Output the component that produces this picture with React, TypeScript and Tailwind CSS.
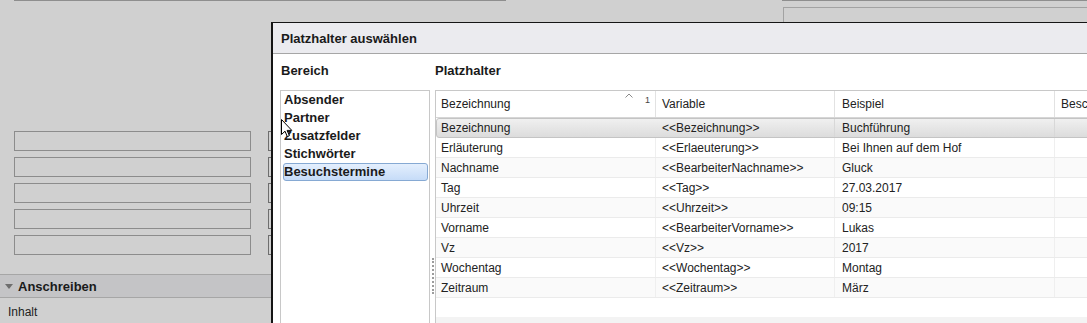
import React from "react";

const rows: [string, string, string][] = [
  ["Bezeichnung", "<<Bezeichnung>>", "Buchführung"],
  ["Erläuterung", "<<Erlaeuterung>>", "Bei Ihnen auf dem Hof"],
  ["Nachname", "<<BearbeiterNachname>>", "Gluck"],
  ["Tag", "<<Tag>>", "27.03.2017"],
  ["Uhrzeit", "<<Uhrzeit>>", "09:15"],
  ["Vorname", "<<BearbeiterVorname>>", "Lukas"],
  ["Vz", "<<Vz>>", "2017"],
  ["Wochentag", "<<Wochentag>>", "Montag"],
  ["Zeitraum", "<<Zeitraum>>", "März"],
];

const areas = ["Absender", "Partner", "Zusatzfelder", "Stichwörter", "Besuchstermine"];

function Cursor() {
  return (
    <svg
      className="absolute left-[281px] top-[119px] z-10"
      width="12"
      height="19"
      viewBox="0 0 12 19"
    >
      <path
        d="M0.5 0.5 L0.5 15.5 L4 12.2 L6.3 17.6 L8.4 16.7 L6.1 11.4 L10.8 11.4 Z"
        fill="#ffffff"
        stroke="#000000"
        strokeWidth="1"
        strokeLinejoin="miter"
      />
    </svg>
  );
}

export default function App() {
  return (
    <div className="relative w-[1087px] h-[323px] overflow-hidden bg-[#d0d0d0] font-['Liberation_Sans',Arial,sans-serif] text-[#1a1a1a]">
      {/* top strip of background */}
      <div className="flex h-[22px]">
        <div className="w-[14px] shrink-0" />
        <div className="w-[492px] h-px shrink-0 bg-[#8e8e8e]" />
        <div className="w-[276px] shrink-0" />
        <div className="flex-1 flex flex-col">
          <div className="h-px bg-[#8e8e8e]" />
          <div className="mt-[6px] ml-px flex-1 border-l border-t border-[#a2a2a2]" />
        </div>
      </div>

      {/* left background panel */}
      <div className="flex flex-col w-[300px]">
        <div className="h-[109px]" />
        <div className="flex flex-col gap-[6px]">
          {[0, 1, 2, 3, 4].map((i) => (
            <div key={i} className="flex h-[20px]">
              <div className="ml-[14px] w-[237px] border border-[#8c8c8c]" />
              <div className="ml-[17px] w-[30px] border border-[#6e6e6e]" />
            </div>
          ))}
        </div>
        <div className="h-[19px]" />
        <div className="h-[24px] flex items-center border-t border-b border-[#a6a6a6] bg-[#c4c4c6]">
          <svg className="ml-[5px]" width="8" height="5" viewBox="0 0 8 5">
            <polygon points="0,0 8,0 4,5" fill="#6e6e6e" />
          </svg>
          <span className="ml-[5px] text-[13px] font-bold leading-[15px]">Anschreiben</span>
        </div>
        <div className="pl-[8px] pt-[7px] text-[12px] leading-[14px] text-[#222]">Inhalt</div>
      </div>

      {/* dialog */}
      <div className="absolute left-[271px] top-[22px] w-[840px] h-[320px] bg-white border-l-2 border-t border-[#151515] flex flex-col">
        <div className="h-[31px] shrink-0 bg-[#ebebef] border-b border-[#a6a6a6] pl-[8px] flex items-center text-[13px] font-bold leading-[15px] text-[#1a1a1a]">
          Platzhalter auswählen
        </div>
        <div className="flex flex-1 min-h-0 pl-[7px]">
          {/* Bereich */}
          <div className="w-[150px] shrink-0 flex flex-col">
            <div className="h-[36px] shrink-0 pl-px pt-[9px] text-[13px] font-bold leading-[15px]">Bereich</div>
            <div className="flex-1 border border-[#c8c8c8] flex flex-col">
              {areas.map((a) =>
                a === "Besuchstermine" ? (
                  <div
                    key={a}
                    className="ml-[2px] mr-px h-[18px] flex items-center border border-[#86a9d3] rounded-[3px] bg-gradient-to-b from-[#e4effd] to-[#c6dcf8] text-[13px] font-bold"
                  >
                    {a}
                  </div>
                ) : (
                  <div key={a} className="h-[18px] flex items-center pl-[3px] text-[13px] font-bold">
                    {a}
                  </div>
                )
              )}
            </div>
          </div>

          {/* splitter */}
          <div className="w-[5px] shrink-0 flex flex-col">
            <div className="ml-[2px] mt-[204px] h-[36px] w-[2px] border-l-2 border-dotted border-[#9c9c9c]" />
          </div>

          {/* Platzhalter */}
          <div className="flex-1 flex flex-col">
            <div className="h-[36px] shrink-0 pt-[9px] text-[13px] font-bold leading-[15px]">Platzhalter</div>
            <div className="flex-1 border-l border-t border-[#c8c8c8] flex flex-col text-[12px] text-[#222]">
              {/* header */}
              <div className="h-[27px] shrink-0 flex border-b border-[#d6d6d6]">
                <div className="relative w-[220px] shrink-0 border-r border-[#e2e2e2] pl-[5px] flex items-center">
                  Bezeichnung
                  <svg className="absolute left-[189px] top-[2px]" width="8" height="5" viewBox="0 0 8 5">
                    <polyline points="0.5,4.5 4,1 7.5,4.5" fill="none" stroke="#8a8a8a" strokeWidth="1" />
                  </svg>
                  <span className="absolute left-[209px] top-[4px] text-[9px] leading-[10px] text-[#444]">1</span>
                </div>
                <div className="w-[179px] shrink-0 border-r border-[#e2e2e2] pl-[6px] flex items-center">Variable</div>
                <div className="w-[220px] shrink-0 border-r border-[#e2e2e2] pl-[7px] flex items-center">Beispiel</div>
                <div className="flex-1 pl-[6px] flex items-center">Beschreibung</div>
              </div>
              {/* rows */}
              {rows.map((r, i) =>
                i === 0 ? (
                  <div
                    key={i}
                    className="h-[20px] shrink-0 flex border border-[#c4c4c4] rounded-[3px] bg-gradient-to-b from-[#f0f0f0] to-[#dcdcdc]"
                  >
                    <div className="w-[219px] shrink-0 pl-[4px] flex items-center">{r[0]}</div>
                    <div className="w-[179px] shrink-0 border-r border-[#d8d8d8] pl-[6px] flex items-center">{r[1]}</div>
                    <div className="w-[220px] shrink-0 border-r border-[#d8d8d8] pl-[7px] flex items-center">{r[2]}</div>
                    <div className="flex-1" />
                  </div>
                ) : (
                  <div
                    key={i}
                    className={
                      "h-[20px] shrink-0 flex border-b border-[#ebebeb] " +
                      (i % 2 === 0 ? "bg-[#fafafa]" : "bg-white")
                    }
                  >
                    <div className="w-[220px] shrink-0 border-r border-[#efefef] pl-[5px] flex items-center">{r[0]}</div>
                    <div className="w-[179px] shrink-0 border-r border-[#efefef] pl-[6px] flex items-center">{r[1]}</div>
                    <div className="w-[220px] shrink-0 border-r border-[#efefef] pl-[7px] flex items-center">{r[2]}</div>
                    <div className="flex-1" />
                  </div>
                )
              )}
              <div className="h-[19px] shrink-0" />
              <div className="h-[20px] shrink-0 bg-[#f3f3f3]" />
            </div>
          </div>
        </div>
      </div>

      <Cursor />
    </div>
  );
}
